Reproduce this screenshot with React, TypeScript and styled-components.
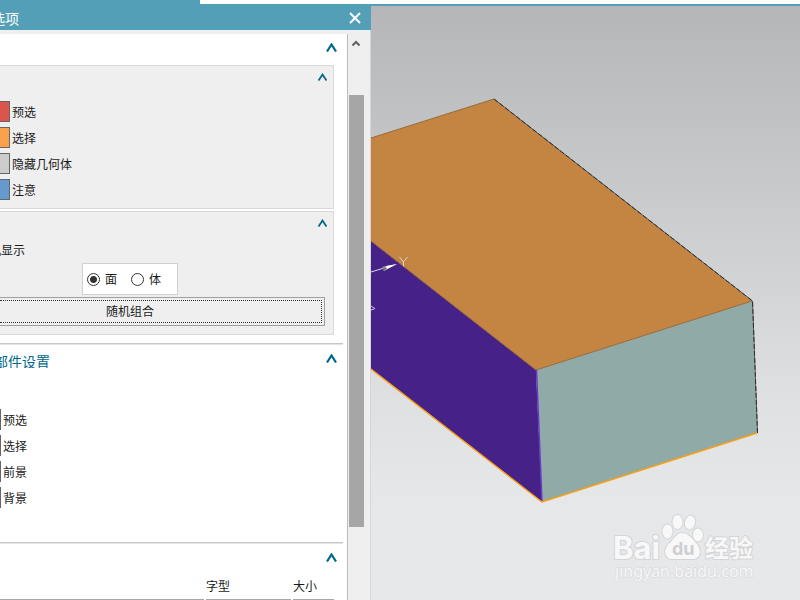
import React from "react";
import styled, { createGlobalStyle } from "styled-components";

const teal = "#539fb8";
const accent = "#00688b";

const GlobalStyle = createGlobalStyle`
  * { box-sizing: border-box; }
  body {
    margin: 0;
    background: #ffffff;
    color: #1a1a1a;
    font: 12px/18px "Noto Sans CJK SC", sans-serif;
  }
`;

const Page = styled.div`
  display: flex;
  flex-direction: column;
  height: 100vh;
  overflow: hidden;
`;

const TopStrip = styled.header`
  flex: none;
  height: 6px;
  border-bottom: 2px solid ${teal};
`;

const ActiveTab = styled.div`
  width: 25%;
  height: 4px;
  background: ${teal};
`;

const Workspace = styled.div`
  flex: 1;
  min-height: 0;
  display: flex;
`;

const Dialog = styled.section`
  flex: none;
  width: 371px;
  display: flex;
  flex-direction: column;
  background: #efefef;
`;

const TitleBar = styled.div`
  flex: none;
  height: 24px;
  padding-right: 9px;
  display: flex;
  align-items: center;
  justify-content: space-between;
  background: ${teal};
  color: #ffffff;
`;

const Clipped = styled.div<{ $width: number }>`
  width: ${(p) => p.$width}px;
  display: flex;
  justify-content: flex-end;
  overflow: hidden;
  white-space: nowrap;
`;

const Title = styled.h1`
  margin: 0;
  font-size: 14px;
  line-height: 20px;
  font-weight: 400;
`;

const IconButton = styled.button`
  display: flex;
  padding: 0;
  border: 0;
  background: none;
  color: inherit;
`;

const DialogBody = styled.div`
  flex: 1;
  min-height: 0;
  display: flex;
  padding-top: 4px;
  border-right: 1px solid #d6d6d6;
`;

const Content = styled.div`
  flex: 1;
  overflow: hidden;
  background: #ffffff;
  border-right: 1px solid #bcbcbc;
`;

const Section = styled.section<{ $height: number }>`
  height: ${(p) => p.$height}px;
  margin-right: 4px;
  border-bottom: 1px solid #e6e6e6;
  box-shadow: inset 0 -1px #c6c6c6;
`;

const SectionHeader = styled.div<{ $height: number }>`
  height: ${(p) => p.$height}px;
  padding: 9px 6px 0 0;
  display: flex;
  align-items: flex-start;
  justify-content: space-between;
  color: ${accent};
`;

const SectionTitle = styled.h2`
  margin: 0;
  font-size: 14px;
  line-height: 14px;
  font-weight: 400;
`;

const Group = styled.div<{ $height: number }>`
  height: ${(p) => p.$height}px;
  margin: 0 9px 2px 0;
  background: #efefef;
  border: 1px solid #d9d9d9;
  border-left: 0;
`;

const GroupHeader = styled.div<{ $height: number }>`
  height: ${(p) => p.$height}px;
  padding: 7px 6px 0 0;
  display: flex;
  align-items: flex-start;
  justify-content: flex-end;
  color: ${accent};
`;

const SwatchList = styled.div<{ $top: number }>`
  display: flex;
  flex-direction: column;
  gap: 5px;
  padding-top: ${(p) => p.$top}px;
`;

const SwatchRow = styled.label`
  display: flex;
  align-items: center;
  gap: 2px;
  height: 21px;
`;

const Swatch = styled.button<{ $color: string; $width: number }>`
  width: ${(p) => p.$width}px;
  height: 21px;
  padding: 0;
  border: 1px solid #666666;
  border-left: 0;
  background: ${(p) => p.$color};
`;

const RadioGroup = styled.div`
  width: 96px;
  height: 32px;
  margin: 4px 0 2px 82px;
  padding-left: 4px;
  display: flex;
  align-items: center;
  gap: 14px;
  background: #ffffff;
  border: 1px solid #cfcfd4;
`;

const RadioLabel = styled.label`
  display: flex;
  align-items: center;
  gap: 5px;
`;

const Radio = styled.input`
  appearance: none;
  width: 13px;
  height: 13px;
  margin: 0;
  border: 1px solid #333333;
  border-radius: 50%;
  background: #ffffff;
  &:checked {
    background: radial-gradient(circle, #333333 3px, #ffffff 4px);
  }
`;

const RandomButton = styled.button`
  display: block;
  width: calc(100% - 8px);
  height: 29px;
  padding: 2px 2px 2px 0;
  border: 1px solid #a0a0a0;
  border-left: 0;
  background: #efefef;
  color: inherit;
  font: inherit;
`;

const FocusRing = styled.span`
  display: flex;
  align-items: center;
  height: 23px;
  padding: 0 0 2px 106px;
  border: 1px dotted #333333;
  border-left: 0;
`;

const FontTable = styled.table`
  width: 336px;
  margin-top: 4px;
  table-layout: fixed;
  border-collapse: separate;
  border-spacing: 0;
`;

const HeadCell = styled.th<{ $width: number }>`
  width: ${(p) => p.$width}px;
  padding: 0 2px 0 0;
  font-weight: 400;
  text-align: left;
  vertical-align: top;
`;

const HeadText = styled.div`
  height: 23px;
  border-bottom: 1px solid #a8a8a8;
`;

const ScrollTrack = styled.div`
  flex: none;
  width: 22px;
  padding: 6px 0 0 1px;
  display: flex;
  flex-direction: column;
  color: #606060;
`;

const ScrollButton = styled(IconButton)`
  height: 55px;
  padding-left: 3px;
`;

const ScrollThumb = styled.div`
  width: 15px;
  height: 432px;
  background: #a6a6a6;
`;

const Viewport = styled.main`
  flex: 1;
  min-width: 0;
  overflow: hidden;
  background: linear-gradient(#b5b6b8, #c8c9cb 30%, #dfe0e2 66%, #e5e7e9 82%, #e7e8ea);
`;

const Scene = styled.svg`
  display: block;
  width: 100%;
  height: 100%;
`;

function Chevron() {
  return (
    <svg width="11" height="9" viewBox="0 0 11 9" fill="none" stroke="currentColor" strokeWidth="2.2">
      <path d="M1 8.500 5.500 1.500 10 8.500" />
    </svg>
  );
}

function SmallChevron() {
  return (
    <svg width="9" height="8" viewBox="0 0 9 8" fill="none" stroke="currentColor" strokeWidth="1.8">
      <path d="M.5 7.500 4.500 1.500 8.500 7.500" />
    </svg>
  );
}

function ScrollChevron() {
  return (
    <svg width="8" height="7" viewBox="0 0 8 7" fill="none" stroke="currentColor" strokeWidth="2">
      <path d="M.5 5.500 4 2 7.500 5.500" />
    </svg>
  );
}

function Swatches({ items, width, top }: { items: [string, string][]; width: number; top: number }) {
  return (
    <SwatchList $top={top}>
      {items.map(([label, color]) => (
        <SwatchRow key={label}>
          <Swatch type="button" $color={color} $width={width} />
          {label}
        </SwatchRow>
      ))}
    </SwatchList>
  );
}

function Model() {
  return (
    <Scene viewBox="371 6 429 594" preserveAspectRatio="xMinYMin slice" role="img" aria-label="长方体">
      <path d="M371 138 494 99 752 301 536 370 371 241Z" fill="#c48442" />
      <path d="M371 241 536 370 542 502 371 369Z" fill="#452188" />
      <path d="M536 370 752 301 757 433 542 502Z" fill="#90aaa7" />
      <g fill="none" strokeWidth="1">
        <path d="M371 138 494 99M371 241 536 370 752 301" stroke="#996a3a" />
        <path d="M494 99 752.500 301 757.500 433" stroke="#5c5c5c" />
        <path d="M494 99 752.500 301 757.500 433" stroke="#2a2a2a" strokeDasharray="5 2" />
        <path d="M536.500 370 542 502" stroke="#683cc4" strokeWidth="1.5" />
        <path d="M371 369 542 502 757 433" stroke="#fa9f12" strokeWidth="1.4" />
      </g>
      <path d="M371 272 384 268" stroke="#d8d8e0" />
      <path d="M382 267 397 264 384 271Z" fill="#b8b8b8" />
      <path d="M382 267 387 268 384 271Z" fill="#777777" />
      <path d="M386 266 397 264 387 269Z" fill="#ffffff" />
      <path d="M399.500 257 403.500 262V266.500M407.500 257 403.500 262" fill="none" stroke="#dcd2cc" />
      <path d="M371 306 375 308.500 371 310" fill="none" stroke="#c8c0dc" />
      <g fill="#f8f8f8" stroke="#d3d5d7" strokeWidth="2" paintOrder="stroke" strokeLinejoin="round">
        <text x="613" y="559" fontFamily="Inter" fontSize="31" fontWeight="700">Bai</text>
        <ellipse cx="667.500" cy="531.500" rx="5" ry="7" />
        <ellipse cx="677.500" cy="522" rx="5" ry="7" />
        <ellipse cx="690" cy="522.500" rx="5" ry="7" transform="rotate(12 690 522.5)" />
        <ellipse cx="698" cy="535" rx="5" ry="6.500" />
        <path d="M682 533C677 533 674 538 670 543 663 548 664 559 672 559H693C701 559 702 549 696 543 692 538 688 533 682 533Z" />
        <text x="705" y="557" fontFamily="Noto Sans CJK SC" fontSize="24" fontWeight="700">经验</text>
        <text x="615" y="577" fontFamily="Noto Sans" fontSize="16" strokeWidth="1">jingyan.baidu.com</text>
      </g>
      <text x="672" y="555" fill="#cdcfd1" fontFamily="Inter" fontSize="18" fontWeight="700">du</text>
    </Scene>
  );
}

export default function App() {
  return (
    <Page>
      <GlobalStyle />
      <TopStrip>
        <ActiveTab />
      </TopStrip>
      <Workspace>
        <Dialog>
          <TitleBar>
            <Clipped $width={19}>
              <Title>选项</Title>
            </Clipped>
            <IconButton type="button" aria-label="关闭">
              <svg width="14" height="12" viewBox="0 0 14 12" stroke="currentColor" strokeWidth="2">
                <path d="M2 1 12 11M12 1 2 11" />
              </svg>
            </IconButton>
          </TitleBar>
          <DialogBody>
            <Content>
              <Section $height={311}>
                <SectionHeader $height={31}>
                  <span />
                  <IconButton type="button" aria-label="折叠">
                    <Chevron />
                  </IconButton>
                </SectionHeader>
                <Group $height={144}>
                  <GroupHeader $height={35}>
                    <IconButton type="button" aria-label="折叠">
                      <SmallChevron />
                    </IconButton>
                  </GroupHeader>
                  <Swatches
                    width={10}
                    top={0}
                    items={[
                      ["预选", "#dc544c"],
                      ["选择", "#f8a04c"],
                      ["隐藏几何体", "#cccccc"],
                      ["注意", "#649acc"],
                    ]}
                  />
                </Group>
                <Group $height={124}>
                  <GroupHeader $height={29}>
                    <IconButton type="button" aria-label="折叠">
                      <SmallChevron />
                    </IconButton>
                  </GroupHeader>
                  <Clipped $width={25}>机显示</Clipped>
                  <RadioGroup role="radiogroup">
                    <RadioLabel>
                      <Radio type="radio" name="kind" defaultChecked />面
                    </RadioLabel>
                    <RadioLabel>
                      <Radio type="radio" name="kind" />体
                    </RadioLabel>
                  </RadioGroup>
                  <RandomButton type="button">
                    <FocusRing>随机组合</FocusRing>
                  </RandomButton>
                </Group>
              </Section>
              <Section $height={199}>
                <SectionHeader $height={30}>
                  <Clipped $width={50}>
                    <SectionTitle>部件设置</SectionTitle>
                  </Clipped>
                  <IconButton type="button" aria-label="折叠">
                    <Chevron />
                  </IconButton>
                </SectionHeader>
                <Swatches
                  width={1}
                  top={34}
                  items={[
                    ["预选", "#666666"],
                    ["选择", "#666666"],
                    ["前景", "#666666"],
                    ["背景", "#666666"],
                  ]}
                />
              </Section>
              <Section $height={80}>
                <SectionHeader $height={29}>
                  <span />
                  <IconButton type="button" aria-label="折叠">
                    <Chevron />
                  </IconButton>
                </SectionHeader>
                <FontTable>
                  <thead>
                    <tr>
                      <HeadCell $width={206}>
                        <HeadText />
                      </HeadCell>
                      <HeadCell $width={87}>
                        <HeadText>字型</HeadText>
                      </HeadCell>
                      <HeadCell $width={43}>
                        <HeadText>大小</HeadText>
                      </HeadCell>
                    </tr>
                  </thead>
                </FontTable>
              </Section>
            </Content>
            <ScrollTrack>
              <ScrollButton type="button" aria-label="向上滚动">
                <ScrollChevron />
              </ScrollButton>
              <ScrollThumb />
            </ScrollTrack>
          </DialogBody>
        </Dialog>
        <Viewport>
          <Model />
        </Viewport>
      </Workspace>
    </Page>
  );
}
